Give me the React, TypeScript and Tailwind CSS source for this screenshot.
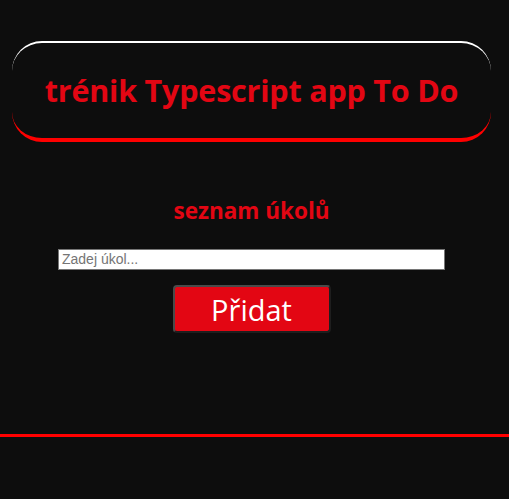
import React, { useState } from 'react';

const App: React.FC = () => {
  const [task, setTask] = useState('');

  return (
    <div className="min-h-screen bg-[#0d0d0d] pt-[41px] font-['Open_Sans',sans-serif]">
      {/* Header */}
      <header className="ml-[12px] w-[479px] h-[101px] rounded-[30px] border-t-2 border-b-4 border-t-white border-b-[#ff0000] flex items-center justify-center">
        <h1 className="text-[30.5px] font-bold text-[#e30613] tracking-[-0.2px] leading-none">trénik Typescript app To Do</h1>
      </header>

      {/* Task list */}
      <main className="flex flex-col items-center pr-[6px]">
        <h2 className="mt-[56px] text-[22.5px] font-bold text-[#e30613] leading-[26px]">seznam úkolů</h2>
        <input
          value={task}
          onChange={(e) => setTask(e.target.value)}
          placeholder="Zadej úkol..."
          className="mt-[25px] w-[387px] h-[21px] bg-white border border-[#767676] px-[3px] text-[14px] text-black placeholder:text-[#757575] font-['Liberation_Sans',sans-serif] outline-none"
        />
        <button className="mt-[15px] w-[158px] h-[48px] bg-[#e30613] rounded-[4px] border-2 border-t-[#4a4a4a] border-l-[#4a4a4a] border-r-[#1e1e1e] border-b-[#1e1e1e] text-white text-[29px] leading-none">
          Přidat
        </button>
      </main>

      <hr className="mt-[101px] border-0 h-[3px] bg-[#ff0000]" />
    </div>
  );
};

export default App;
